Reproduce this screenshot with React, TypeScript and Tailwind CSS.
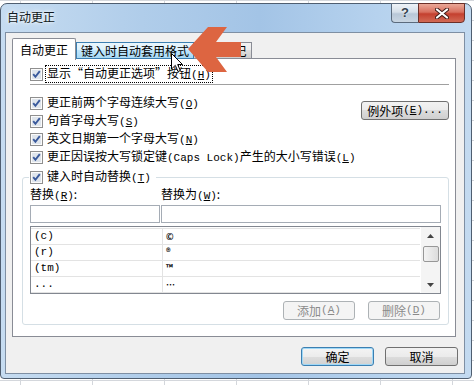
import type { ReactNode } from 'react'

function CheckBox() {
  return (
    <svg width="13" height="13" viewBox="0 0 13 13" className="shrink-0">
      <rect x="0.5" y="0.5" width="12" height="12" fill="#fbfbfb" stroke="#8f8f8f" />
      <rect x="2" y="2" width="9" height="9" fill="#dfe5ec" />
      <path d="M3.2 6.2 5.4 8.8 9.8 3.2" fill="none" stroke="#3a5a9c" strokeWidth="1.9" />
    </svg>
  )
}

function Key({ k }: { k: string }) {
  return (
    <span className="font-['Liberation_Mono',monospace] text-[11px]">
      (<span className="underline">{k}</span>)
    </span>
  )
}

function CheckRow({ children, focus }: { children: ReactNode; focus?: boolean }) {
  return (
    <div className="flex h-[18px] items-center gap-[2px]">
      <CheckBox />
      <span
        className={`whitespace-nowrap px-[1px] leading-[13px] ${focus ? 'border border-dotted border-black' : 'border border-transparent'}`}
      >
        {children}
      </span>
    </div>
  )
}

function Button({ children, kind }: { children: ReactNode; kind?: 'default' | 'disabled' }) {
  if (kind === 'disabled') {
    return (
      <div className="flex h-[19px] w-[72px] items-center justify-center rounded-[3px] border border-[#adb2b5] bg-[#f4f4f4] text-[#8a8a8a]">
        {children}
      </div>
    )
  }
  if (kind === 'default') {
    return (
      <div className="flex h-[19px] w-[73px] items-center justify-center rounded-[3px] border border-[#3c7fb1] bg-[linear-gradient(#f4f4f4_0%,#ececec_50%,#dedede_50%,#d2d2d2_100%)] shadow-[inset_0_0_0_1px_#9fd8f7]">
        {children}
      </div>
    )
  }
  return (
    <div className="flex h-[19px] w-[73px] items-center justify-center rounded-[3px] border border-[#707070] bg-[linear-gradient(#f2f2f2_0%,#ebebeb_50%,#dddddd_50%,#cfcfcf_100%)]">
      {children}
    </div>
  )
}

const replaceRows = [
  ['(c)', '©'],
  ['(r)', '®'],
  ['(tm)', '™'],
  ['...', '…'],
]

export default function App() {
  return (
    <div className="relative h-[385px] w-[474px] overflow-hidden bg-white font-['Noto_Sans_CJK_SC','Liberation_Sans',sans-serif] text-[12px] text-black [background-image:linear-gradient(to_right,#d4d7dc_1px,transparent_1px),linear-gradient(to_bottom,#d4d7dc_1px,transparent_1px)] [background-position:20px_0] [background-size:72px_20px]">
      {/* window */}
      <div className="mt-[3px] flex h-[376px] w-[472px] flex-col rounded-t-[7px] rounded-b-[4px] border border-[#4f5e70] bg-[linear-gradient(90deg,#c6dcf1_0%,#b0cdea_30%,#a3c4e6_55%,#b6d2ee_80%,#c3daf0_100%)]">
        <div className="flex h-[28px] items-start justify-between">
          <div className="pl-[6px] pt-[5px] leading-[16px] text-[#101820] [text-shadow:0_0_6px_#ffffff,0_0_3px_#ffffff]">
            自动更正
          </div>
          <div className="-mt-[1px] mr-[6px] flex">
            <div className="flex h-[20px] w-[27px] items-center justify-center rounded-bl-[4px] border border-r-0 border-[#5b6b7d] bg-[linear-gradient(#eef3f8_0%,#d5dfe9_45%,#b8c7d7_55%,#c9d6e3_100%)] font-['Liberation_Sans',sans-serif] text-[13px] font-bold text-[#34424f] [text-shadow:0_0_2px_#ffffff]">
              ?
            </div>
            <div className="flex h-[20px] w-[47px] items-center justify-center rounded-br-[4px] border border-[#6b2f28] bg-[linear-gradient(#eaa898_0%,#d8705f_45%,#c4402f_55%,#d26a55_100%)]">
              <svg width="14" height="11" viewBox="0 0 14 11">
                <path d="M2 1.5 12 9.5 M12 1.5 2 9.5" stroke="#3b1a16" strokeWidth="4" strokeLinecap="round" />
                <path d="M2 1.5 12 9.5 M12 1.5 2 9.5" stroke="#ffffff" strokeWidth="2.2" strokeLinecap="round" />
              </svg>
            </div>
          </div>
        </div>

        {/* client */}
        <div className="ml-[4px] flex h-[342px] w-[460px] flex-col border border-[#7e8fa3] bg-[#f0f0f0] pl-[6px] pt-[5px]">
          <div className="relative z-10 flex h-[21px] items-end">
            <div className="-mb-[1px] flex h-[22px] w-[64px] items-center justify-center rounded-t-[2px] border border-b-0 border-[#898c95] bg-white">
              自动更正
            </div>
            <div className="flex h-[17px] w-[118px] items-center justify-center border border-[#3c7fb1] bg-[linear-gradient(#eaf6fd_0%,#d9f0fc_50%,#bee6fd_50%,#a7d9f5_100%)]">
              键入时自动套用格式
            </div>
            <div className="flex h-[17px] w-[58px] items-center justify-center border border-l-0 border-[#898c95] bg-[linear-gradient(#f2f2f2_0%,#ebebeb_50%,#dddddd_50%,#cfcfcf_100%)]">
              智能标记
            </div>
          </div>

          <div className="-mt-[1px] h-[279px] w-[444px] border border-[#898c95] bg-white pl-[9px] pr-[6px]">
            <div className="mt-[6px] pl-[8px]">
              <CheckRow focus>
                显示“自动更正选项”按钮<Key k="H" />
              </CheckRow>
            </div>
            <div className="ml-[8px] mt-[1px] h-px bg-[#a0a0a0]" />

            <div className="mt-[9px] flex items-start justify-between pl-[8px]">
              <div className="flex flex-col">
                <CheckRow>
                  更正前两个字母连续大写<Key k="O" />
                </CheckRow>
                <CheckRow>
                  句首字母大写<Key k="S" />
                </CheckRow>
                <CheckRow>
                  英文日期第一个字母大写<Key k="N" />
                </CheckRow>
                <CheckRow>
                  更正因误按大写锁定键
                  <span className="font-['Liberation_Mono',monospace] text-[11px]">(Caps Lock)</span>
                  产生的大小写错误<Key k="L" />
                </CheckRow>
              </div>
              <div className="mt-[7px] flex h-[19px] w-[88px] items-center justify-center rounded-[3px] border border-[#707070] bg-[linear-gradient(#f2f2f2_0%,#ebebeb_50%,#dddddd_50%,#cfcfcf_100%)]">
                例外项<Key k="E" />
                <span className="font-['Liberation_Mono',monospace] text-[11px]">...</span>
              </div>
            </div>

            {/* group box */}
            <div className="mt-[11px] h-[148px] rounded-[3px] border border-[#d5dfe5] px-[7px]">
              <div className="-mt-[10px] flex h-[18px]">
                <div className="-ml-[1px] bg-white pl-[1px] pr-[3px]">
                  <CheckRow>
                    键入时自动替换<Key k="T" />
                  </CheckRow>
                </div>
              </div>

              <div className="mt-[2px] flex h-[14px] items-center">
                <div className="w-[131px]">
                  替换<Key k="R" />:
                </div>
                <div>
                  替换为<Key k="W" />:
                </div>
              </div>

              <div className="mt-[3px] flex h-[18px] gap-[1px]">
                <div className="w-[130px] border border-[#a5acb5] bg-white" />
                <div className="flex-1 border border-[#a5acb5] bg-white" />
              </div>

              <div className="mt-[3px] flex h-[68px] border border-[#828790] bg-white">
                <div className="flex-1 pt-[1px]">
                  <div className="border-b border-[#e3e3e3]">
                    {replaceRows.map(([from, to]) => (
                      <div key={from} className="flex h-[16px] border-t border-[#e3e3e3]">
                        <div className="flex w-[131px] items-center pl-[3px] font-['Liberation_Mono',monospace] text-[11px]">
                          {from}
                        </div>
                        <div className="flex flex-1 items-center border-l border-[#e3e3e3] pl-[3px] text-[9px] font-bold">
                          {to}
                        </div>
                      </div>
                    ))}
                  </div>
                </div>
                <div className="ml-[1px] flex w-[19px] flex-col items-center bg-[#f4f4f4]">
                  <div className="flex h-[17px] items-center justify-center">
                    <svg width="7" height="4" viewBox="0 0 7 4">
                      <path d="M0 4 3.5 0 7 4Z" fill="#444" />
                    </svg>
                  </div>
                  <div className="mt-[2px] h-[16px] w-[16px] rounded-[2px] border border-[#979797] bg-[linear-gradient(90deg,#f3f3f3,#dcdcdc)]" />
                  <div className="flex-1" />
                  <div className="flex h-[17px] items-center justify-center">
                    <svg width="7" height="4" viewBox="0 0 7 4">
                      <path d="M0 0 3.5 4 7 0Z" fill="#444" />
                    </svg>
                  </div>
                </div>
              </div>

              <div className="mt-[7px] flex justify-end gap-[13px] pr-[1px]">
                <Button kind="disabled">
                  添加<Key k="A" />
                </Button>
                <Button kind="disabled">
                  删除<Key k="D" />
                </Button>
              </div>
            </div>
          </div>

          <div className="mt-[10px] flex justify-end gap-[11px] pr-[6px]">
            <Button kind="default">确定</Button>
            <Button>取消</Button>
          </div>
        </div>
      </div>

      {/* annotation arrow */}
      <svg className="absolute left-0 top-0 z-20" width="474" height="100" viewBox="0 0 474 100">
        <polygon points="188,49 208,27 227,27 216,42 241,42 241,57 216,57 227,72 208,72" fill="#dd6541" />
      </svg>

      {/* mouse pointer */}
      <svg className="absolute left-[171px] top-[53px] z-30" width="13" height="20" viewBox="0 0 13 20">
        <path d="M0.5 0.5 0.5 16 4.3 12.4 7 18.5 9.3 17.5 6.7 11.5 11.5 11.5Z" fill="#ffffff" stroke="#000000" strokeWidth="1" />
      </svg>
    </div>
  )
}
